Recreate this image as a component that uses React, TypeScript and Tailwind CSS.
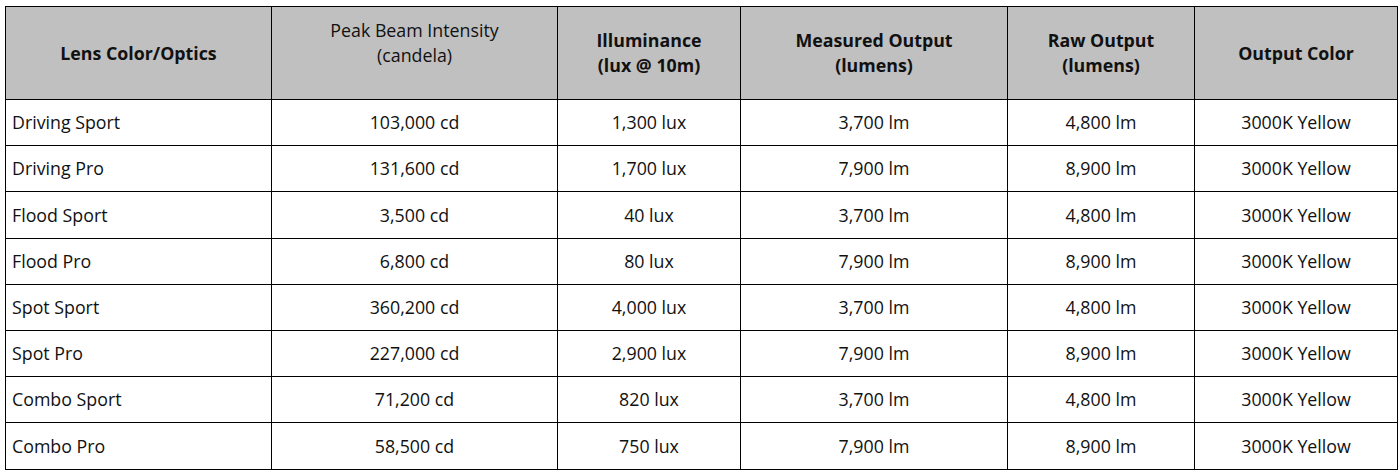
import React from "react";

const rows = [
  ["Driving Sport", "103,000 cd", "1,300 lux", "3,700 lm", "4,800 lm", "3000K Yellow"],
  ["Driving Pro", "131,600 cd", "1,700 lux", "7,900 lm", "8,900 lm", "3000K Yellow"],
  ["Flood Sport", "3,500 cd", "40 lux", "3,700 lm", "4,800 lm", "3000K Yellow"],
  ["Flood Pro", "6,800 cd", "80 lux", "7,900 lm", "8,900 lm", "3000K Yellow"],
  ["Spot Sport", "360,200 cd", "4,000 lux", "3,700 lm", "4,800 lm", "3000K Yellow"],
  ["Spot Pro", "227,000 cd", "2,900 lux", "7,900 lm", "8,900 lm", "3000K Yellow"],
  ["Combo Sport", "71,200 cd", "820 lux", "3,700 lm", "4,800 lm", "3000K Yellow"],
  ["Combo Pro", "58,500 cd", "750 lux", "7,900 lm", "8,900 lm", "3000K Yellow"],
];

export default function App() {
  return (
    <div className="bg-white pl-[5px] pt-[6px] font-['Open_Sans',sans-serif] text-[17.8px] text-[#111]">
      <table className="w-[1392px] table-fixed border-collapse">
        <colgroup>
          <col className="w-[266px]" />
          <col className="w-[286px]" />
          <col className="w-[183px]" />
          <col className="w-[267px]" />
          <col className="w-[187px]" />
          <col className="w-[203px]" />
        </colgroup>
        <thead>
          <tr className="h-[93px] bg-[#c0c0c0] leading-[25px]">
            <th className="border border-black font-bold">Lens Color/Optics</th>
            <th className="border border-black pb-[20px] font-normal">
              Peak Beam Intensity
              <br />
              (candela)
            </th>
            <th className="border border-black font-bold">
              Illuminance
              <br />
              (lux @ 10m)
            </th>
            <th className="border border-black font-bold">
              Measured Output
              <br />
              (lumens)
            </th>
            <th className="border border-black font-bold">
              Raw Output
              <br />
              (lumens)
            </th>
            <th className="border border-black font-bold">Output Color</th>
          </tr>
        </thead>
        <tbody>
          {rows.map((r) => (
            <tr key={r[0]} className="h-[46.2px]">
              {r.map((c, i) => (
                <td
                  key={i}
                  className={
                    i === 0
                      ? "border border-black pl-[6px] text-left"
                      : "border border-black text-center"
                  }
                >
                  {c}
                </td>
              ))}
            </tr>
          ))}
        </tbody>
      </table>
    </div>
  );
}
